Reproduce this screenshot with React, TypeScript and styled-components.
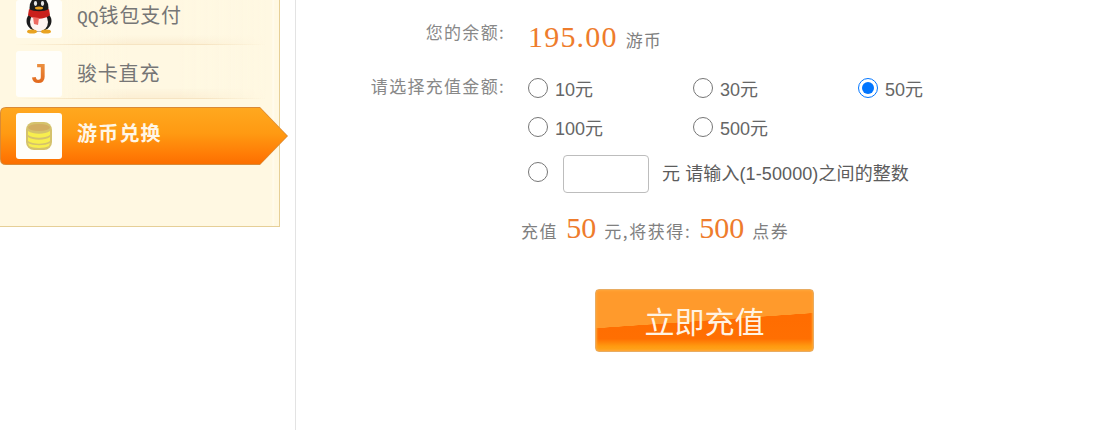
import React from "react"
import styled, { createGlobalStyle } from "styled-components"

const CJK = `"Noto Sans CJK SC", "Liberation Sans", sans-serif`
const SERIF = `"Liberation Serif", "Noto Sans CJK SC", serif`

const GlobalStyle = createGlobalStyle`
    html, body {
        margin: 0;
        padding: 0;
        background: #ffffff;
        overflow: hidden;
    }
`

const amounts = ["10元", "30元", "50元", "100元", "500元"]

const QQIcon = () => (
    <svg width="30" height="34" viewBox="0 0 30 34">
        <ellipse cx="15" cy="8" rx="9.5" ry="12" fill="#1c1c1c" />
        <ellipse cx="15" cy="21" rx="12.5" ry="10.5" fill="#1c1c1c" />
        <ellipse cx="15" cy="22" rx="9" ry="9.5" fill="#fdf3f0" />
        <path d="M5 9 C10 12 20 12 25 9 L26 15 C20 20 10 20 4 15 Z" fill="#c9201c" />
        <path d="M9 17 L15 18 L14 25 L10 24 Z" fill="#ee6a62" />
        <ellipse cx="11.5" cy="3.5" rx="1.6" ry="2.4" fill="#e8e8e8" />
        <ellipse cx="18.5" cy="3.5" rx="1.6" ry="2.4" fill="#e8e8e8" />
        <ellipse cx="15" cy="8" rx="4" ry="1.5" fill="#e9a321" />
        <ellipse cx="8" cy="31.5" rx="5" ry="2" fill="#e9a321" />
        <ellipse cx="22" cy="31.5" rx="5" ry="2" fill="#e9a321" />
    </svg>
)

const CoinsIcon = () => (
    <svg width="28" height="30" viewBox="0 0 28 30">
        <rect x="1" y="1" width="26" height="28" rx="8" fill="#d5c26c" />
        <ellipse cx="14" cy="6.5" rx="11" ry="3.5" fill="#d2ae62" />
        <path d="M3 10 C8 13.5 20 13.5 25 10 L25 14 C20 17.5 8 17.5 3 14 Z" fill="#f7ee4e" />
        <path d="M3 16 C8 19.5 20 19.5 25 16 L25 20 C20 23.5 8 23.5 3 20 Z" fill="#f7ee4e" />
        <path d="M3 22 C8 25 20 25 25 22 L24 25 C20 27.5 8 27.5 4 25 Z" fill="#f7ee4e" />
    </svg>
)

export default function App() {
    return (
        <S.Page>
            <GlobalStyle />
            <S.Sidebar>
                <S.MenuRow $height={45} $cropped>
                    <S.IconTile $cropped><QQIcon /></S.IconTile>
                    <S.MenuLabel $lift={6}><S.LatinPart>QQ</S.LatinPart>钱包支付</S.MenuLabel>
                </S.MenuRow>
                <S.MenuRow $height={54}>
                    <S.IconTile><S.JLetter>J</S.JLetter></S.IconTile>
                    <S.MenuLabel $lift={2}>骏卡直充</S.MenuLabel>
                </S.MenuRow>
                <S.ActiveRow>
                    <S.ActiveFill>
                        <S.IconTile><CoinsIcon /></S.IconTile>
                        <S.ActiveLabel>游币兑换</S.ActiveLabel>
                    </S.ActiveFill>
                </S.ActiveRow>
            </S.Sidebar>
            <S.Main>
                <S.FormGrid>
                    <S.FieldLabel>您的余额:</S.FieldLabel>
                    <S.Balance>
                        <S.BigNumber $tracking={1.2}>195.00</S.BigNumber>
                        <S.Hint>游币</S.Hint>
                    </S.Balance>
                    <S.FieldLabel>请选择充值金额:</S.FieldLabel>
                    <S.Options>
                        <S.RadioGrid>
                            {amounts.map((amount) => (
                                <S.RadioItem key={amount}>
                                    <S.Radio type="radio" name="amount" defaultChecked={amount === "50元"} />
                                    {amount}
                                </S.RadioItem>
                            ))}
                        </S.RadioGrid>
                        <S.CustomRow>
                            <S.CustomRadio type="radio" name="amount" />
                            <S.AmountInput type="text" />
                            <S.CustomHint>元 请输入(1-50000)之间的整数</S.CustomHint>
                        </S.CustomRow>
                    </S.Options>
                </S.FormGrid>
                <S.Summary>
                    <span>充值</span>
                    <S.BigNumber $tracking={0}>50</S.BigNumber>
                    <span>元,将获得:</span>
                    <S.BigNumber $tracking={0}>500</S.BigNumber>
                    <span>点券</span>
                </S.Summary>
                <S.SubmitRow>
                    <S.SubmitButton type="button">立即充值</S.SubmitButton>
                </S.SubmitRow>
            </S.Main>
        </S.Page>
    )
}

const S = {
    Page: styled.div`
        display: flex;
        align-items: flex-start;
        width: 1110px;
        height: 430px;
        overflow: hidden;
    `,
    Sidebar: styled.aside`
        box-sizing: border-box;
        flex: none;
        width: 280px;
        height: 227px;
        background: linear-gradient(90deg, #fff8e2 0, #fff8e2 272px, #fffbef 273px, #fff8e2 275px);
        border-right: 1px solid #e6cf97;
        border-bottom: 1px solid #e6cf97;
        font-family: ${CJK};
    `,
    MenuRow: styled.div<{ $height: number; $cropped?: boolean }>`
        box-sizing: border-box;
        display: flex;
        align-items: ${(p) => (p.$cropped ? "flex-end" : "center")};
        gap: 15px;
        height: ${(p) => p.$height}px;
        margin: 0 13px 0 16px;
        padding: ${(p) => (p.$cropped ? "0 0 6px" : "5px 0 0")};
        background:
            linear-gradient(90deg, #fff8e2 18%, rgba(255, 248, 226, 0) 45%, rgba(255, 248, 226, 0) 65%, #fff8e2 100%),
            linear-gradient(180deg, rgba(255, 248, 226, 0) 80%, #fcefd4 100%);
        border-bottom: 1px solid;
        border-image: linear-gradient(90deg, rgba(246, 228, 194, 0), #f6e4c2 25%, #f6e4c2 75%, rgba(246, 228, 194, 0)) 1;
    `,
    IconTile: styled.div<{ $cropped?: boolean }>`
        display: flex;
        flex: none;
        align-items: ${(p) => (p.$cropped ? "flex-end" : "center")};
        justify-content: center;
        width: 46px;
        height: ${(p) => (p.$cropped ? "38px" : "46px")};
        padding-bottom: ${(p) => (p.$cropped ? "4px" : "0")};
        box-sizing: border-box;
        background: #fffefa;
        border-radius: 3px;
    `,
    JLetter: styled.span`
        font-family: "Liberation Sans", sans-serif;
        font-size: 27px;
        font-weight: 700;
        color: transparent;
        background: linear-gradient(180deg, #ee9a48, #de5a10);
        background-clip: text;
    `,
    MenuLabel: styled.span<{ $lift: number }>`
        font-size: 20px;
        line-height: 28px;
        letter-spacing: 0.8px;
        color: #767676;
        align-self: center;
        margin-bottom: ${(p) => p.$lift}px;
    `,
    LatinPart: styled.span`
        font-family: "Liberation Mono", monospace;
        font-size: 18px;
        letter-spacing: 0;
    `,
    ActiveRow: styled.div`
        box-sizing: border-box;
        width: 288px;
        height: 58px;
        margin-top: 8px;
        padding: 1px;
        background: #d98a36;
        clip-path: path("M6 0 H260 L288 29 L260 58 H6 Q0 58 0 52 V6 Q0 0 6 0 Z");
    `,
    ActiveFill: styled.div`
        box-sizing: border-box;
        display: flex;
        align-items: center;
        gap: 15px;
        height: 56px;
        padding-left: 15px;
        background: linear-gradient(180deg, #ffa81f 0%, #ff9a12 45%, #ff7a05 85%, #fb6f00 100%);
        clip-path: path("M5 0 H259 L286 28 L259 56 H5 Q0 56 0 51 V5 Q0 0 5 0 Z");
    `,
    ActiveLabel: styled.span`
        margin-bottom: 7px;
        font-size: 20px;
        font-weight: 700;
        letter-spacing: 1.2px;
        color: #fff6e6;
    `,
    Main: styled.main`
        box-sizing: border-box;
        flex: none;
        width: 815px;
        height: 430px;
        margin-left: 15px;
        border-left: 1px solid #e3e3e3;
    `,
    FormGrid: styled.div`
        display: grid;
        grid-template-columns: 209px 1fr;
        column-gap: 22px;
        padding-top: 18px;
        font-family: ${CJK};
    `,
    FieldLabel: styled.div`
        font-size: 17px;
        line-height: 28px;
        letter-spacing: 1.3px;
        color: #888888;
        text-align: right;
    `,
    Balance: styled.div`
        box-sizing: border-box;
        display: flex;
        align-items: baseline;
        gap: 8px;
        height: 54px;
        margin-left: 1px;
        padding-top: 2px;
    `,
    BigNumber: styled.span<{ $tracking: number }>`
        font-family: ${SERIF};
        font-size: 30px;
        letter-spacing: ${(p) => p.$tracking}px;
        color: #ee7c2c;
    `,
    Hint: styled.span`
        font-size: 17px;
        letter-spacing: 1px;
        color: #808080;
    `,
    Options: styled.div`
        display: flex;
        flex-direction: column;
        margin-left: 1px;
    `,
    RadioGrid: styled.div`
        display: grid;
        grid-template-columns: repeat(3, 165px);
        grid-auto-rows: 39px;
        margin-top: -4px;
    `,
    RadioItem: styled.label`
        display: flex;
        align-items: center;
        gap: 7px;
        font-family: "Liberation Sans", ${CJK};
        font-size: 18px;
        color: #666666;
    `,
    Radio: styled.input`
        flex: none;
        width: 20px;
        height: 20px;
        margin: 0;
    `,
    CustomRow: styled.div`
        display: flex;
        align-items: center;
        margin-top: 9px;
    `,
    CustomRadio: styled.input`
        flex: none;
        width: 20px;
        height: 20px;
        margin: 0 0 4px;
    `,
    AmountInput: styled.input`
        box-sizing: border-box;
        width: 86px;
        height: 38px;
        margin: 0 13px 0 15px;
        border: 1px solid #bdbdbd;
        border-radius: 4px;
        background: #ffffff;
    `,
    CustomHint: styled.span`
        margin-bottom: 5px;
        font-family: "Liberation Sans", ${CJK};
        font-size: 18px;
        letter-spacing: 0.1px;
        color: #5c5c5c;
    `,
    Summary: styled.div`
        display: flex;
        align-items: baseline;
        gap: 8px;
        margin: 18px 0 0 225px;
        font-family: ${CJK};
        font-size: 17px;
        letter-spacing: 1.6px;
        color: #808080;
    `,
    SubmitRow: styled.div`
        display: flex;
        margin: 44px 0 0 299px;
    `,
    SubmitButton: styled.button`
        box-sizing: border-box;
        width: 219px;
        height: 63px;
        padding: 0 0 2px;
        font-family: ${CJK};
        font-size: 30px;
        color: #fff3e3;
        background:
            linear-gradient(176deg, #ff9a2c 0 50%, transparent 50.5%),
            linear-gradient(180deg, #ff6a00 0, #ff6f02 80%, #ff9a10 92%, #ffa61c 100%);
        border: 1px solid #e8ac62;
        border-radius: 4px;
        box-shadow: inset 0 0 2px 1px #ffa63a;
    `,
}
